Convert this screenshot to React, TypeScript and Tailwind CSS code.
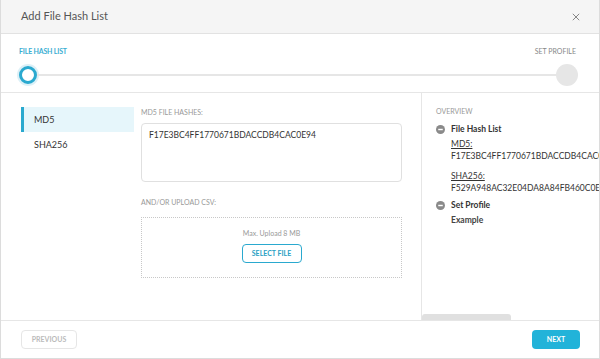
export default function App() {
  const font = { fontFamily: "Lato, 'Open Sans', sans-serif" };

  return (
    <div className="w-[600px] h-[359px] bg-white border-x border-b border-[#dcdcdc] flex flex-col overflow-hidden" style={font}>
      {/* Header */}
      <div className="h-[34px] bg-[#f5f5f5] border-b border-[#e2e2e2] flex items-center justify-between pl-5 pr-[19px]">
        <span className="text-[11px] text-[#555]">Add File Hash List</span>
        <svg width="8" height="8" viewBox="0 0 10 10">
          <path d="M1 1 L9 9 M9 1 L1 9" stroke="#777" strokeWidth="1.1" />
        </svg>
      </div>

      {/* Stepper */}
      <div className="h-[59px] border-b border-[#e6e6e6] pl-[18px] pr-[21px] pt-[12px]">
        <div className="flex justify-between pr-[2px]">
          <span className="text-[7px] font-bold text-[#3aaed2] tracking-tight">FILE HASH LIST</span>
          <span className="text-[7px] text-[#888]">SET PROFILE</span>
        </div>
        <div className="flex items-center mt-[7px]">
          <div className="w-[18px] h-[18px] rounded-full border-[3px] border-[#2aa9cf] bg-white ring-2 ring-[#dcf0f7] shrink-0" />
          <div className="flex-1 h-[2px] bg-[#e6e6e6]" />
          <div className="w-[22px] h-[22px] rounded-full bg-[#e6e6e6] shrink-0" />
        </div>
      </div>

      {/* Body */}
      <div className="h-[227px] flex">
        <div className="w-[420px] flex pl-5 pt-[14px] gap-[7px]">
          <div className="w-[113px] flex flex-col">
            <div className="h-[25px] border-l-[3px] border-[#2aa9cf] bg-[#e6f6fb] pl-[10px] flex items-center text-[9px] text-[#333]">
              MD5
            </div>
            <div className="h-[25px] pl-[13px] flex items-center text-[9px] text-[#333]">SHA256</div>
          </div>
          <div className="w-[261px] flex flex-col">
            <span className="text-[7px] text-[#999] leading-[9px] mt-[1px]">MD5 FILE HASHES:</span>
            <div className="mt-[6px] h-[59px] border border-[#e0e0e0] rounded-sm px-[7px] pt-[5px] text-[8.5px] text-[#333]">
              F17E3BC4FF1770671BDACCDB4CAC0E94
            </div>
            <span className="mt-[16px] text-[7px] text-[#999] leading-[9px]">AND/OR UPLOAD CSV:</span>
            <div className="mt-[10px] h-[61px] border border-dotted border-[#c8c8c8] flex flex-col items-center pt-[11px]">
              <span className="text-[7px] text-[#999] leading-[9px]">Max. Upload 8 MB</span>
              <button className="mt-[6px] h-[19px] w-[60px] border border-[#2aa9cf] rounded-sm text-[7px] font-bold text-[#2a9fc4]">
                SELECT FILE
              </button>
            </div>
          </div>
        </div>

        <div className="flex-1 border-l border-[#e6e6e6] flex flex-col overflow-hidden">
          <div className="pl-[14px] pt-[14px] whitespace-nowrap">
            <div className="text-[7px] text-[#999] leading-[9px]">OVERVIEW</div>
            <div className="mt-[7px] flex items-center gap-[6px] h-[12px]">
              <MinusIcon />
              <span className="text-[8.5px] font-bold text-[#333]">File Hash List</span>
            </div>
            <div className="pl-[15px] text-[8.5px] text-[#333] leading-[12px]">
              <div className="mt-[3px] underline">MD5:</div>
              <div>F17E3BC4FF1770671BDACCDB4CAC0E94</div>
              <div className="mt-[8px] underline">SHA256:</div>
              <div>F529A948AC32E04DA8A84FB460C0E1F3</div>
            </div>
            <div className="mt-[5px] flex items-center gap-[6px] h-[12px]">
              <MinusIcon />
              <span className="text-[8.5px] font-bold text-[#333]">Set Profile</span>
            </div>
            <div className="pl-[15px] mt-[3px] text-[8.5px] font-bold text-[#444] leading-[12px]">Example</div>
          </div>
          <div className="mt-auto w-[89px] h-[6px] rounded-t-[3px] bg-[#e0e0e0]" />
        </div>
      </div>

      {/* Footer */}
      <div className="flex-1 border-t border-[#e6e6e6] flex items-center justify-between pl-5 pr-[19px]">
        <button className="h-[19px] w-[56px] border border-[#e6e6e6] rounded-sm text-[7px] font-bold text-[#bbb]">
          PREVIOUS
        </button>
        <button className="h-[19px] w-[48px] bg-[#22b3d9] rounded-sm text-[7px] font-bold text-white">NEXT</button>
      </div>
    </div>
  );
}

function MinusIcon() {
  return (
    <svg width="9" height="9" viewBox="0 0 10 10" className="shrink-0">
      <circle cx="5" cy="5" r="5" fill="#8a8a8a" />
      <rect x="2.5" y="4.2" width="5" height="1.6" fill="#fff" />
    </svg>
  );
}
